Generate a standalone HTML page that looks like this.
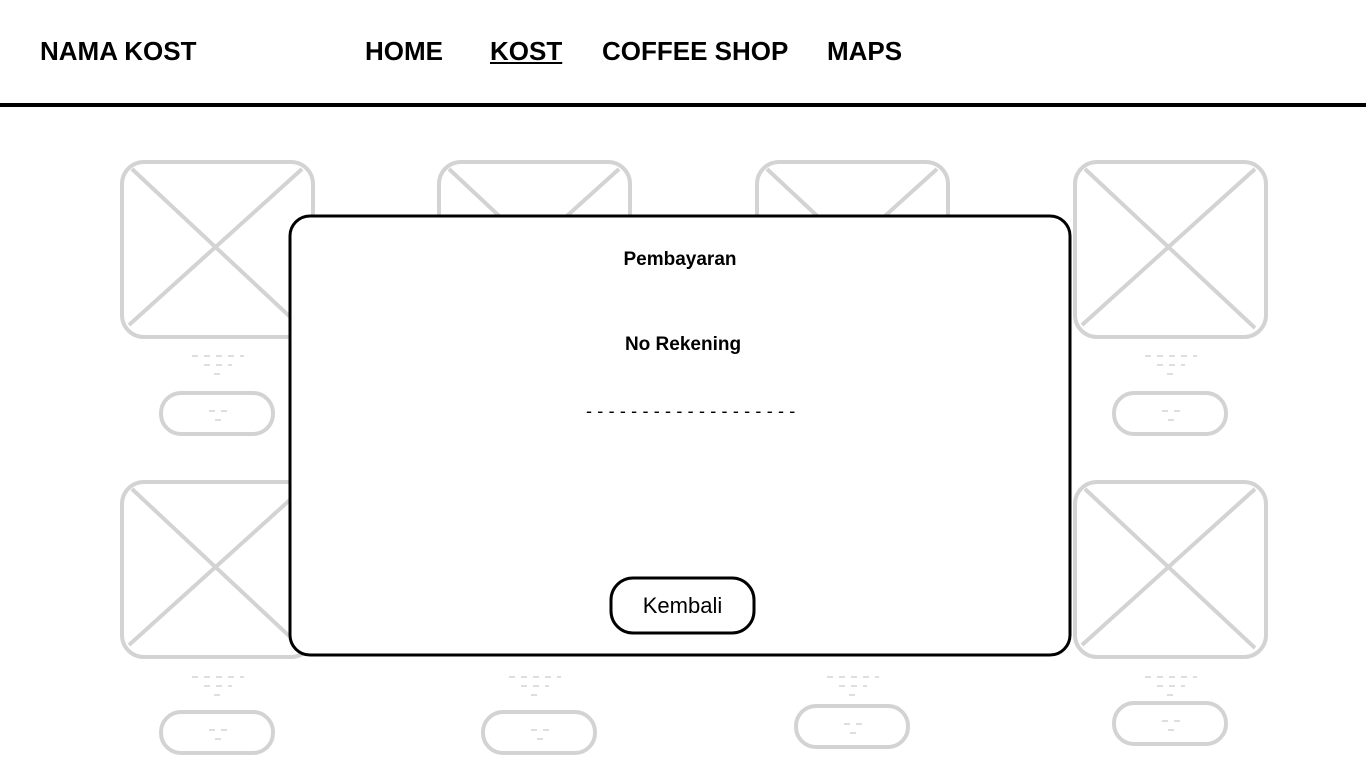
<!DOCTYPE html>
<html><head><meta charset="utf-8"><style>
html,body{margin:0;width:1366px;height:768px;overflow:hidden;background:#fff;font-family:"Liberation Sans",sans-serif}
.t{position:absolute;white-space:nowrap;font-weight:bold;color:#000}
</style></head><body>
<svg width="1366" height="768" style="position:absolute;left:0;top:0">
<rect x="0" y="103" width="1366" height="4" fill="#000"/>
<g fill="none" stroke="#d3d3d3" stroke-width="4">
<g id="c">
<rect x="122" y="162" width="191" height="175" rx="22"/>
<line x1="132" y1="169" x2="302" y2="328"/><line x1="302" y1="169" x2="129" y2="325"/>
</g>
<use href="#c" x="317"/><use href="#c" x="635"/><use href="#c" x="953"/>
<use href="#c" y="320"/><use href="#c" x="953" y="320"/>
<rect x="161" y="393" width="112" height="41" rx="20"/>
<rect x="1114" y="393" width="112" height="41" rx="20"/>
<rect x="161" y="712" width="112" height="41" rx="20"/>
<rect x="483" y="712" width="112" height="41" rx="20"/>
<rect x="796" y="706" width="112" height="41" rx="20"/>
<rect x="1114" y="703" width="112" height="41" rx="20"/>
</g>
<g stroke="#d3d3d3" stroke-width="1.5" stroke-dasharray="6,6">
<line x1="192" y1="356" x2="244" y2="356"/><line x1="204" y1="365" x2="232" y2="365"/><line x1="214" y1="374" x2="220" y2="374"/>
<line x1="1145" y1="356" x2="1197" y2="356"/><line x1="1157" y1="365" x2="1185" y2="365"/><line x1="1167" y1="374" x2="1173" y2="374"/>
<line x1="192" y1="677" x2="244" y2="677"/><line x1="204" y1="686" x2="232" y2="686"/><line x1="214" y1="695" x2="220" y2="695"/>
<line x1="509" y1="677" x2="561" y2="677"/><line x1="521" y1="686" x2="549" y2="686"/><line x1="531" y1="695" x2="537" y2="695"/>
<line x1="827" y1="677" x2="879" y2="677"/><line x1="839" y1="686" x2="867" y2="686"/><line x1="849" y1="695" x2="855" y2="695"/>
<line x1="1145" y1="677" x2="1197" y2="677"/><line x1="1157" y1="686" x2="1185" y2="686"/><line x1="1167" y1="695" x2="1173" y2="695"/>
<line x1="209" y1="411" x2="227" y2="411"/><line x1="215" y1="420" x2="221" y2="420"/>
<line x1="1162" y1="411" x2="1180" y2="411"/><line x1="1168" y1="420" x2="1174" y2="420"/>
<line x1="209" y1="730" x2="227" y2="730"/><line x1="215" y1="739" x2="221" y2="739"/>
<line x1="531" y1="730" x2="549" y2="730"/><line x1="537" y1="739" x2="543" y2="739"/>
<line x1="844" y1="724" x2="862" y2="724"/><line x1="850" y1="733" x2="856" y2="733"/>
<line x1="1162" y1="721" x2="1180" y2="721"/><line x1="1168" y1="730" x2="1174" y2="730"/>
</g>
<rect x="290" y="216" width="780" height="439" rx="20" fill="#fff" stroke="#000" stroke-width="3"/>
<rect x="611" y="578" width="143" height="55" rx="22" fill="#fff" stroke="#000" stroke-width="3"/>
</svg>
<div class="t" style="left:40px;top:36px;font-size:26px">NAMA KOST</div>
<div class="t" style="left:365px;top:36px;font-size:26px">HOME</div>
<div class="t" style="left:490px;top:36px;font-size:26px;text-decoration:underline">KOST</div>
<div class="t" style="left:602px;top:36px;font-size:26px">COFFEE SHOP</div>
<div class="t" style="left:827px;top:36px;font-size:26px">MAPS</div>
<div class="t" style="left:0;width:1360px;text-align:center;top:249px;font-size:19px">Pembayaran</div>
<div class="t" style="left:0;width:1366px;text-align:center;top:334px;font-size:19px">No Rekening</div>
<div class="t" style="left:586px;top:401px;font-size:18px;font-weight:normal;letter-spacing:5.3px">-------------------</div>
<div class="t" style="left:611px;width:143px;text-align:center;top:593px;font-size:22px;font-weight:normal">Kembali</div>
</body></html>
